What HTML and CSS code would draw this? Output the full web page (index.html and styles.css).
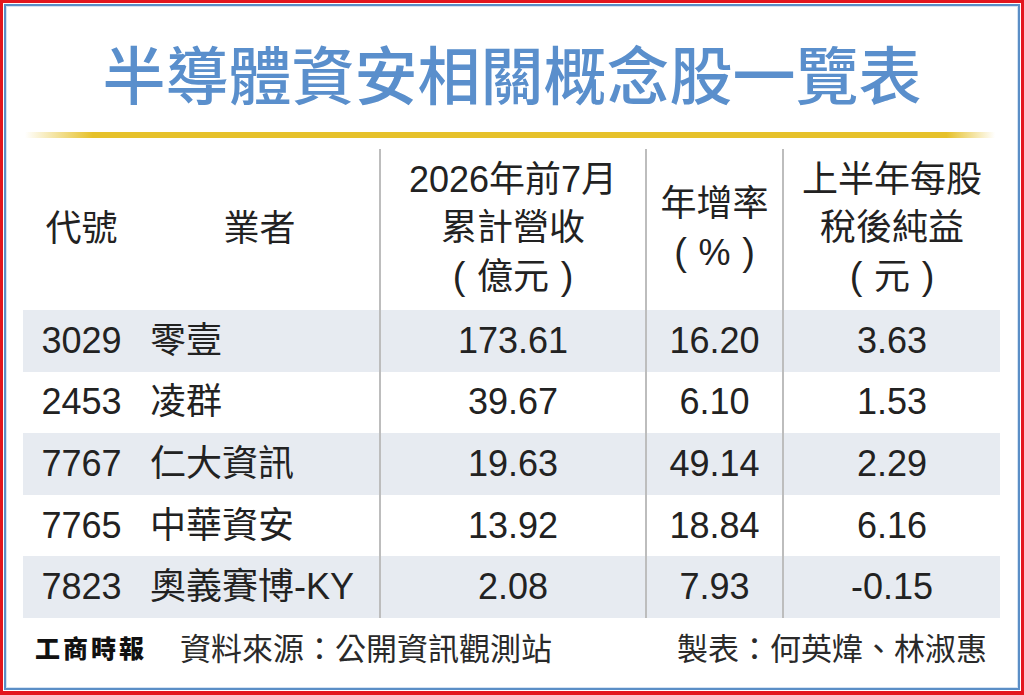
FILE: index.html
```html
<!DOCTYPE html>
<html lang="zh-Hant">
<head>
<meta charset="utf-8">
<title>半導體資安相關概念股一覽表</title>
<link rel="stylesheet" href="styles.css">
</head>
<body>
<div class="frame">
  <div class="inner">
    <h1 class="title">半導體資安相關概念股一覽表</h1>
    <div class="rule"></div>
    <div class="table">
      <div class="hd c1">代號</div>
      <div class="hd c2">業者</div>
      <div class="hd c3 div"><span>2026年前7月</span><span>累計營收</span><span><span class="paren">(</span>億元<span class="paren">)</span></span></div>
      <div class="hd c4 div"><span>年增率</span><span><span class="paren">(</span>%<span class="paren">)</span></span></div>
      <div class="hd c5 div"><span>上半年每股</span><span>稅後純益</span><span><span class="paren">(</span>元<span class="paren">)</span></span></div>

      <div class="cell code band">3029</div>
      <div class="cell name band">零壹</div>
      <div class="cell num band div">173.61</div>
      <div class="cell num band div">16.20</div>
      <div class="cell num band div">3.63</div>

      <div class="cell code">2453</div>
      <div class="cell name">凌群</div>
      <div class="cell num div">39.67</div>
      <div class="cell num div">6.10</div>
      <div class="cell num div">1.53</div>

      <div class="cell code band">7767</div>
      <div class="cell name band">仁大資訊</div>
      <div class="cell num band div">19.63</div>
      <div class="cell num band div">49.14</div>
      <div class="cell num band div">2.29</div>

      <div class="cell code">7765</div>
      <div class="cell name">中華資安</div>
      <div class="cell num div">13.92</div>
      <div class="cell num div">18.84</div>
      <div class="cell num div">6.16</div>

      <div class="cell code band">7823</div>
      <div class="cell name band">奧義賽博-KY</div>
      <div class="cell num band div">2.08</div>
      <div class="cell num band div">7.93</div>
      <div class="cell num band div">-0.15</div>
    </div>
    <div class="footer">
      <span class="logo">工商時報</span>
      <span class="source">資料來源：公開資訊觀測站</span>
      <span class="credit">製表：何英煒、林淑惠</span>
    </div>
  </div>
</div>
</body>
</html>
```
FILE: styles.css
```css
html, body {
  margin: 0;
  padding: 0;
  background: #ffffff;
}

.frame {
  width: 1024px;
  height: 695px;
  box-sizing: border-box;
  border: 3px solid #e3161e;
  border-bottom-width: 4px;
  padding: 1px;
  background: #ffffff;
}

.inner {
  height: 100%;
  box-sizing: border-box;
  border: 2px solid #5b8ec6;
  box-shadow: inset 0 0 0 1px #d4e3f4;
  font-family: "Liberation Sans", "Noto Sans CJK TC", sans-serif;
  color: #222222;
}

.title {
  margin: 31px 0 0 0;
  height: 70px;
  line-height: 70px;
  text-align: center;
  font-family: "Noto Sans CJK TC", sans-serif;
  font-size: 63px;
  font-weight: 500;
  color: #5a8fcc;
  letter-spacing: 0;
}

.rule {
  margin: 25px 23px 0 19px;
  height: 6px;
  background: linear-gradient(to right,
    rgba(230, 193, 42, 0) 0%,
    #e6c12a 7%,
    #e6c12a 95%,
    rgba(230, 193, 42, 0) 100%);
}

.table {
  margin: 11px 0 0 17px;
  width: 977px;
  display: grid;
  grid-template-columns: 117px 239px 266px 137px 218px;
  grid-template-rows: 161px repeat(5, 61.6px);
  font-size: 36px;
}

.hd {
  display: flex;
  flex-direction: column;
  align-items: center;
  justify-content: center;
  text-align: center;
  line-height: 48px;
  padding-bottom: 2px;
}

.paren {
  display: inline-block;
  width: 36px;
  text-align: center;
  font-family: "Liberation Sans", sans-serif;
  font-size: 38px;
  font-weight: 400;
}

.div {
  border-left: 2px solid #bdbdbd;
}

.cell {
  display: flex;
  align-items: center;
  line-height: 40px;
}

.band {
  background: #e7ebf1;
}

.code {
  justify-content: center;
}

.name {
  padding-left: 10px;
}

.num {
  justify-content: center;
}

.footer {
  margin-top: 9px;
  height: 40px;
  display: flex;
  align-items: center;
  padding: 0 31px 0 29px;
  font-family: "Noto Sans CJK TC", sans-serif;
  font-size: 31px;
  color: #2a2a2a;
}

.logo {
  font-size: 25px;
  font-weight: 900;
  letter-spacing: 3px;
  color: #111111;
  margin-right: 33px;
}

.credit {
  margin-left: auto;
}
```
